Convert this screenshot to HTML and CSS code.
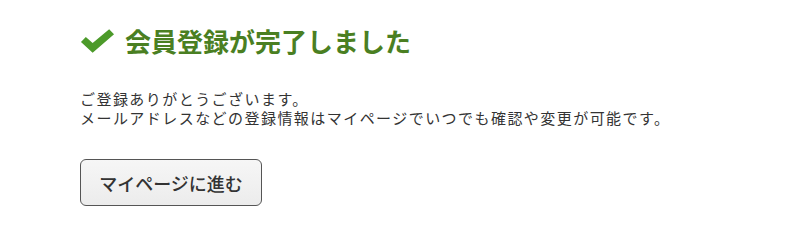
FILE: index.html
```html
<!DOCTYPE html>
<html lang="ja">
<head>
    <meta charset="UTF-8">
    <title>会員登録完了</title>
    <link rel="stylesheet" href="styles.css">
</head>
<body>
    <div class="complete">
        <h1 class="complete-title">
            <svg class="check-icon" viewBox="0 0 36 24" width="35" height="24">
                <path d="M1 13 L6 8 L13 14 L30 0 L35 5 L13 24 Z" fill="#4c9a2a"/>
            </svg>
            会員登録が完了しました
        </h1>
        <div class="complete-text">
            <p>ご登録ありがとうございます。</p>
            <p>メールアドレスなどの登録情報はマイページでいつでも確認や変更が可能です。</p>
        </div>
        <button class="mypage-button">マイページに進む</button>
    </div>
</body>
</html>
```

FILE: styles.css
```css
body {
    margin: 0;
    background: #fff;
    font-family: "Noto Sans CJK JP", "Noto Sans", sans-serif;
    color: #333;
}

.complete {
    padding: 25px 0 0 80px;
}

/* Title */
.complete-title {
    display: flex;
    align-items: center;
    gap: 10px;
    margin: 0;
    font-size: 26px;
    font-weight: bold;
    color: #4a7f22;
    line-height: 32px;
}
.check-icon {
    display: block;
}

/* Message */
.complete-text {
    margin-top: 33px;
    font-size: 15px;
    letter-spacing: 1.45px;
}
.complete-text p {
    margin: 0;
    height: 19px;
    line-height: 17px;
}

/* Button */
.mypage-button {
    margin-top: 31px;
    width: 182px;
    height: 47px;
    font-family: inherit;
    font-size: 18px;
    font-weight: 500;
    color: #333;
    background: linear-gradient(#f6f6f6, #ececec);
    border: 1px solid #555;
    border-radius: 6px;
    cursor: pointer;
}
```
